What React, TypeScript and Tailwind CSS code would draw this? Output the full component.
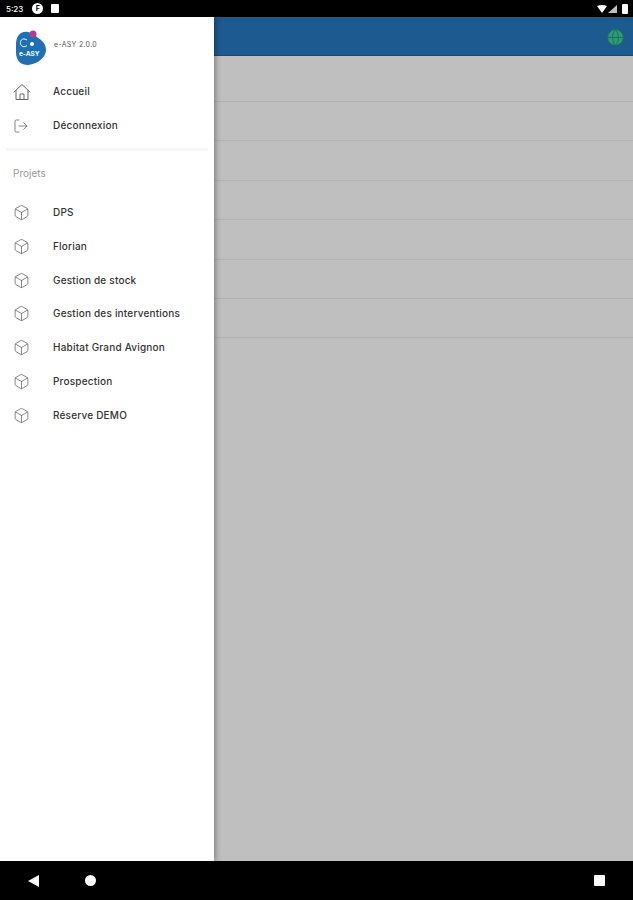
import { Box, Globe, LogOut } from "lucide-react";

const projects = [
  "DPS",
  "Florian",
  "Gestion de stock",
  "Gestion des interventions",
  "Habitat Grand Avignon",
  "Prospection",
  "Réserve DEMO",
];

function MenuRow({ icon, label }: { icon: React.ReactNode; label: string }) {
  return (
    <div className="flex h-[33.8px] items-center pl-[13px]">
      <span className="flex w-[40px] shrink-0 items-center">{icon}</span>
      <span className="text-[10px] font-medium tracking-[0.2px] text-[#333]">{label}</span>
    </div>
  );
}

function HomeIcon() {
  return (
    <svg width="18" height="18" viewBox="0 0 18 18" fill="none" stroke="#666" strokeWidth="1" strokeLinejoin="round" strokeLinecap="round">
      <path d="M1 9 L9 1.5 L17 9" />
      <path d="M3 7.5 V16.5 H15 V7.5" />
      <path d="M7 16.5 V11 H11 V16.5" />
    </svg>
  );
}

function Logo() {
  return (
    <svg width="34" height="36" viewBox="0 0 34 36" className="shrink-0">
      <path
        d="M7 3 C13 0 19 3 23 7 C27 10 32 13 32 20 C32 27 24 34 14 35 C7 35 2 31 2 22 C2 14 1 7 7 3 Z"
        fill="#1f6fb5"
      />
      <circle cx="19" cy="4" r="3.5" fill="#b83a8e" />
      <circle cx="18" cy="14" r="2" fill="#ffffff" />
      <path d="M13 10 C8 7 6 11 6.5 13.5 C7 17 11 17.5 13 15.5" stroke="#ffffff" strokeWidth="1" fill="none" />
      <text x="5" y="26" fontSize="6.5" fontWeight="700" fill="#ffffff" fontFamily="Inter, sans-serif">
        e-ASY
      </text>
    </svg>
  );
}

export default function App() {
  const lineRows = [0, 1, 2, 3, 4, 5, 6];

  return (
    <div className="flex h-[900px] w-[633px] flex-col overflow-hidden bg-black font-['Inter',sans-serif]">
      <div className="flex h-[17px] shrink-0 items-center justify-between bg-black px-[5px] text-white">
        <div className="flex items-center">
          <span className="ml-[1px] text-[8px] font-medium leading-none">5:23</span>
          <span className="ml-[9px] grid size-[11px] place-items-center rounded-full bg-white text-[7px] font-bold leading-none text-black">
            F
          </span>
          <span className="ml-[8px] h-[9px] w-[8px] rounded-[1px] bg-white" />
        </div>
        <div className="flex items-center">
          <svg width="10" height="8" viewBox="0 0 10 8">
            <path d="M0 1 Q5 -1 10 1 L5 8 Z" fill="#fff" />
          </svg>
          <svg width="9" height="8" viewBox="0 0 9 8" className="ml-[1px]">
            <path d="M9 0 V8 H0 Z" fill="#fff" fillOpacity="0.75" />
          </svg>
          <span className="ml-[5px] h-[10px] w-[6px] rounded-[1px] bg-white" />
        </div>
      </div>

      <div className="flex min-h-0 flex-1 bg-[#bfbfbf]">
        <aside className="relative z-10 w-[214px] shrink-0 bg-white shadow-[2px_0_5px_rgba(0,0,0,0.3)]">
          <div className="flex h-[58px] items-center pl-[14px] pt-[4px]">
            <Logo />
            <span className="mb-[6px] ml-[6px] text-[7px] tracking-[0.3px] text-[#555]">e-ASY 2.0.0</span>
          </div>
          <MenuRow icon={<HomeIcon />} label="Accueil" />
          <MenuRow icon={<LogOut className="size-[16px] text-[#666]" strokeWidth={1.2} />} label="Déconnexion" />
          <div className="mx-[6px] mt-[5px] h-[3px] bg-[#f7f7f7]" />
          <p className="mb-[11px] mt-[15px] pl-[13px] text-[10px] leading-[14px] text-[#999]">Projets</p>
          <div className="pt-[5px]">
            {projects.map((p) => (
              <MenuRow key={p} icon={<Box className="size-[17px] text-[#666]" strokeWidth={1.1} />} label={p} />
            ))}
          </div>
        </aside>

        <main className="min-w-0 flex-1">
          <header className="flex h-[39px] items-center justify-end border-b border-[#154a78] bg-[#1c5a90] pr-[8px] pt-[2px]">
            <Globe className="size-[19px] fill-[#2e9c72] text-[#17705f]" strokeWidth={1.2} />
          </header>
          <div className="pt-[6.6px]">
            {lineRows.map((r) => (
              <div key={r} className="h-[39.4px] border-b border-[#b2b2b2]" />
            ))}
          </div>
        </main>
      </div>

      <div className="flex h-[39px] shrink-0 items-center bg-black text-white">
        <svg width="11" height="12" viewBox="0 0 11 12" className="ml-[28px]">
          <path d="M11 0 V12 L0 6 Z" fill="#fff" />
        </svg>
        <span className="ml-[46px] size-[11px] rounded-full bg-white" />
        <span className="ml-auto mr-[28px] size-[11px] rounded-[1px] bg-white" />
      </div>
    </div>
  );
}
